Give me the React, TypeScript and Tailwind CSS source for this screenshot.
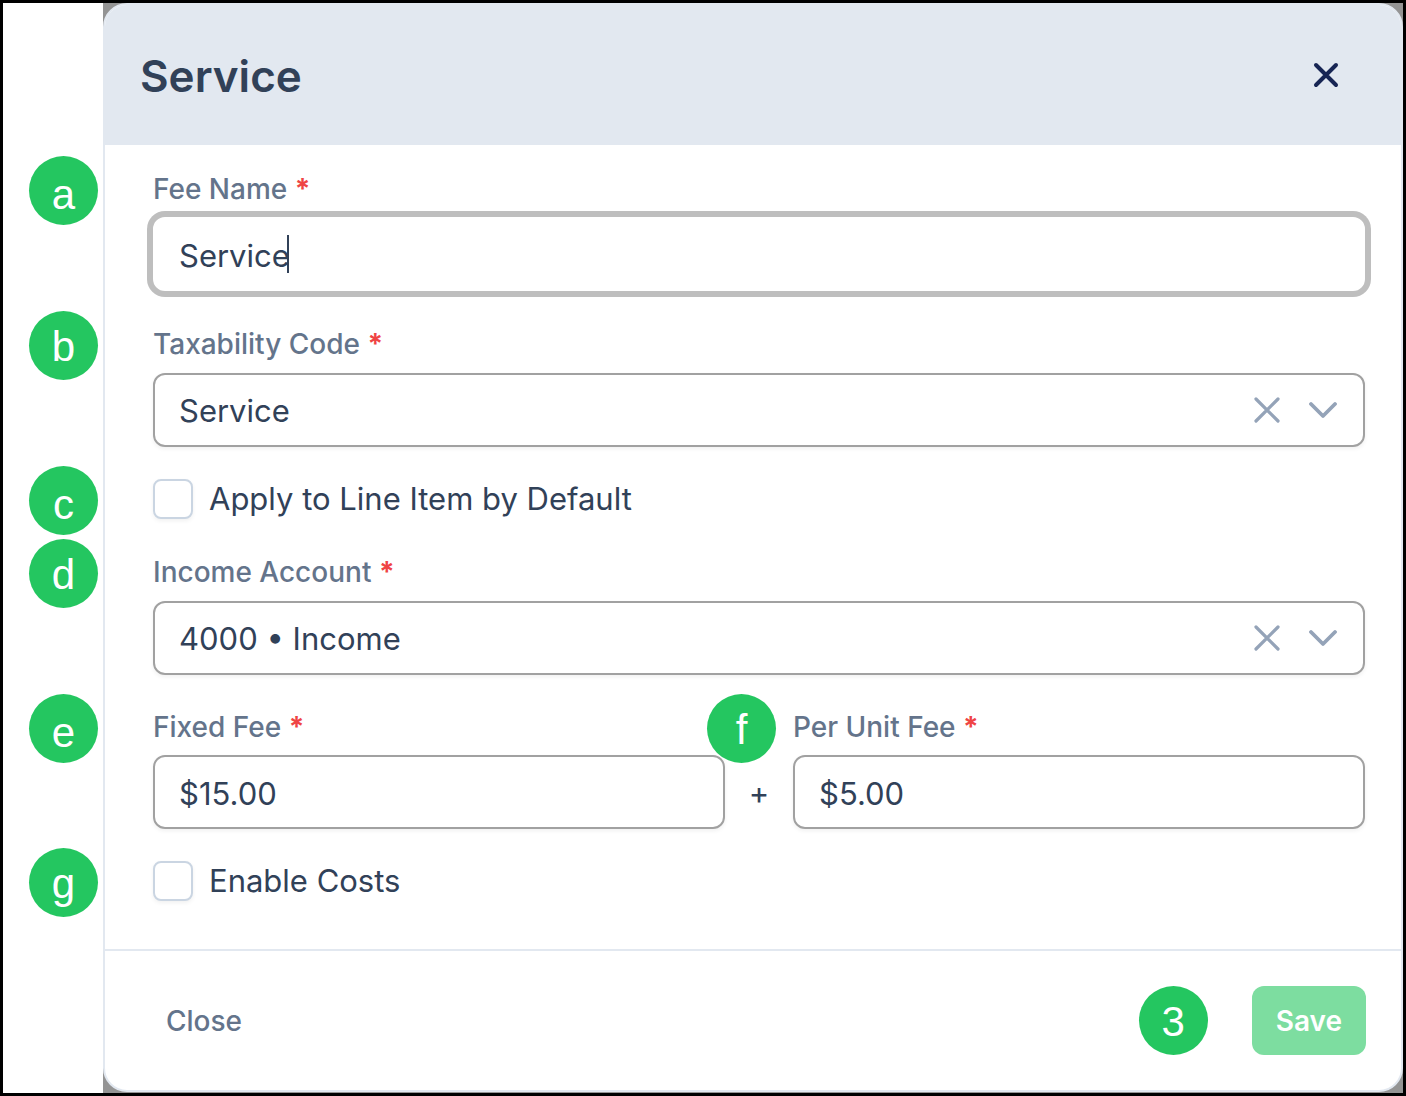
import { useState } from 'react';
import type { ReactNode } from 'react';
import clsx from 'clsx';

// ============================================
// SHARED STYLES
// ============================================

const BOX =
  'block h-[74px] w-full rounded-xl border-2 border-[#a1a1a1] bg-white px-6 pt-0.5 text-[31px] text-slate-700 shadow-[0_2px_4px_rgba(0,0,0,0.06)] outline-none';

// ============================================
// PIECES
// ============================================

interface BadgeProps {
  children: string;
  className?: string;
}

// Short letters sit lower in the circle than tall ones
function Badge({ children, className }: BadgeProps) {
  return (
    <span
      className={clsx(
        'flex size-[69px] items-center justify-center rounded-full bg-[#24c660] font-["Liberation_Sans",Arial,sans-serif] text-[42px] leading-none text-white',
        'ace'.includes(children) ? 'pt-2' : 'pt-0.5',
        className,
      )}
    >
      {children}
    </span>
  );
}

interface RowProps {
  badge: string;
  badgeClass?: string;
  children: ReactNode;
}

function Row({ badge, badgeClass = '-left-[124px] -top-[13px]', children }: RowProps) {
  return (
    <div className="relative min-w-0 flex-1">
      <Badge className={clsx('absolute z-10', badgeClass)}>{badge}</Badge>
      {children}
    </div>
  );
}

interface LabelProps {
  id: string;
  text: string;
  className?: string;
}

function FieldLabel({ id, text, className = 'leading-10' }: LabelProps) {
  return (
    <label htmlFor={id} className={clsx('mb-2 block text-[28px] font-medium text-[#64748b]', className)}>
      {text} <span className="font-bold text-[#ef4444]">*</span>
    </label>
  );
}

interface SelectFieldProps {
  id: string;
  label: string;
  options: string[];
}

function SelectField({ id, label, options }: SelectFieldProps) {
  const [value, setValue] = useState(options[0]);

  return (
    <>
      <FieldLabel id={id} text={label} className="leading-[42px]" />
      <div className="relative">
        <select
          id={id}
          value={value}
          onChange={(e) => setValue(e.target.value)}
          className={clsx(BOX, 'appearance-none')}
        >
          <option value="" />
          {options.map((o) => (
            <option key={o}>{o}</option>
          ))}
        </select>
        <div className="pointer-events-none absolute inset-y-0 right-7 flex items-center gap-7 text-[#94a3b8]">
          <button type="button" aria-label={`Clear ${label}`} className="pointer-events-auto" onClick={() => setValue('')}>
            <svg width="28" height="28" viewBox="0 0 28 28" fill="none" stroke="currentColor" strokeWidth="3.2" strokeLinecap="round">
              <path d="M3 3l22 22M25 3L3 25" />
            </svg>
          </button>
          <svg width="28" height="28" viewBox="0 0 28 28" fill="none" stroke="currentColor" strokeWidth="3.8" strokeLinecap="round" strokeLinejoin="round">
            <path d="M2 8l12 12L26 8" />
          </svg>
        </div>
      </div>
    </>
  );
}

function CheckField({ label }: { label: string }) {
  return (
    <label className="flex items-center gap-4 text-[31px] leading-10 text-slate-700">
      <input
        type="checkbox"
        className="size-10 shrink-0 appearance-none rounded-lg border-2 border-slate-300 bg-white shadow-[0_2px_4px_rgba(0,0,0,0.06)] checked:bg-green-500"
      />
      {label}
    </label>
  );
}

// ============================================
// PAGE
// ============================================

export default function App() {
  const [name, setName] = useState('Service');
  const [fixedFee, setFixedFee] = useState('$15.00');
  const [unitFee, setUnitFee] = useState('$5.00');

  return (
    <div className="flex min-h-screen border-[3px] border-black bg-white font-[Inter,sans-serif]">
      <div className="w-[100px] shrink-0" />
      <div className="flex min-w-0 flex-1 flex-col bg-[#949494] pb-px">
        <form
          className="flex flex-1 flex-col rounded-3xl border-2 border-slate-200 bg-white"
          onSubmit={(e) => e.preventDefault()}
        >
          <header className="flex h-[140px] items-center justify-between rounded-t-[22px] bg-slate-200 pl-[35px] pr-[61px]">
            <h1 className="pt-0.5 text-[44px] font-semibold text-slate-700">Service</h1>
            <button type="button" aria-label="Close dialog" className="text-[#172554]">
              <svg width="28" height="28" viewBox="0 0 28 28" fill="none" stroke="currentColor" strokeWidth="4" strokeLinecap="round">
                <path d="M4 4l20 20M24 4L4 24" />
              </svg>
            </button>
          </header>

          <div className="flex flex-1 flex-col gap-8 pt-6 pr-9 pb-12 pl-12">
            <div>
              <Row badge="a">
                <FieldLabel id="fee-name" text="Fee Name" />
                <div className="relative">
                  <input
                    id="fee-name"
                    value={name}
                    onChange={(e) => setName(e.target.value)}
                    className={clsx(BOX, 'border-white caret-transparent ring-6 ring-[#bebebe]')}
                  />
                  {/* text cursor */}
                  <span className="absolute top-[18px] left-[134px] h-[38px] w-0.5 bg-slate-700" />
                </div>
              </Row>
            </div>

            <div>
              <Row badge="b" badgeClass="-left-[124px] -top-3">
                <SelectField id="tax-code" label="Taxability Code" options={['Service']} />
              </Row>
            </div>

            <div>
              <Row badge="c">
                <CheckField label="Apply to Line Item by Default" />
              </Row>
            </div>

            <div>
              <Row badge="d" badgeClass="-left-[124px] -top-3">
                <SelectField id="income-account" label="Income Account" options={['4000 • Income']} />
              </Row>
            </div>

            <div className="flex items-end">
              <Row badge="e">
                <FieldLabel id="fixed-fee" text="Fixed Fee" />
                <input id="fixed-fee" value={fixedFee} onChange={(e) => setFixedFee(e.target.value)} className={BOX} />
              </Row>
              <span className="flex h-[74px] w-[68px] shrink-0 items-center justify-center pt-0.5 text-[31px] text-slate-700">+</span>
              <Row badge="f" badgeClass="-left-[86px] -top-[13px]">
                <FieldLabel id="unit-fee" text="Per Unit Fee" />
                <input id="unit-fee" value={unitFee} onChange={(e) => setUnitFee(e.target.value)} className={BOX} />
              </Row>
            </div>

            <div>
              <Row badge="g">
                <CheckField label="Enable Costs" />
              </Row>
            </div>
          </div>

          <footer className="flex items-center justify-between border-t-2 border-slate-200 py-[35px] pr-[35px] pl-[61px] text-[28px]">
            <button type="button" className="font-medium text-[#64748b]">
              Close
            </button>
            <div className="flex items-center gap-11">
              <Badge>3</Badge>
              <button type="submit" className="h-[69px] rounded-xl bg-[#7ddda0] px-6 font-semibold text-white">
                Save
              </button>
            </div>
          </footer>
        </form>
      </div>
    </div>
  );
}
